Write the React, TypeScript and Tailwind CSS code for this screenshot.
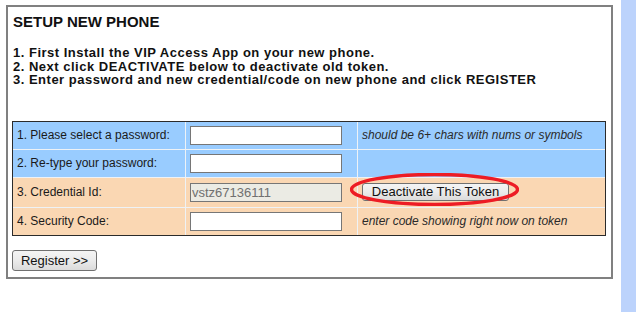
import type { ReactNode } from "react";

// Setup-phone form: a grey-framed box with instructions, a two-tone form
// table and a register button. The red ellipse is a hand-drawn annotation.

const font = { fontFamily: '"Liberation Sans", Arial, sans-serif' };

function Row({
  tone,
  label,
  h,
  field,
  note,
}: {
  tone: "blue" | "peach";
  label: string;
  h: string;
  field: ReactNode;
  note?: ReactNode;
}) {
  const bg = tone === "blue" ? "bg-[#99ccff]" : "bg-[#fad7b3]";
  return (
    <div className={`grid grid-cols-[172px_171px_1fr] gap-px ${h}`}>
      <div className={`${bg} flex items-center pl-[4px] text-[12px] text-[#1a1a1a]`}>{label}</div>
      <div className={`${bg} flex items-center pl-[4px]`}>{field}</div>
      <div className={`${bg} flex items-center pl-[4px] text-[12px] italic text-[#2a2a2a]`}>{note}</div>
    </div>
  );
}

function TextBox({ value, disabled }: { value?: string; disabled?: boolean }) {
  return (
    <input
      readOnly
      value={value ?? ""}
      disabled={disabled}
      className={`w-[152px] h-[19px] border border-[#767676] px-px text-[13px] leading-[17px] outline-none ${
        disabled ? "bg-[#ebebe4] text-[#707070]" : "bg-white"
      }`}
      style={font}
    />
  );
}

function WinButton({ children, className }: { children: ReactNode; className?: string }) {
  return (
    <button
      className={`rounded-[3px] border border-[#707070] bg-gradient-to-b from-[#f4f4f4] via-[#ebebeb] to-[#dbdbdb] text-[13px] text-[#111] ${className ?? ""}`}
      style={font}
    >
      {children}
    </button>
  );
}

export default function App() {
  return (
    <div className="flex items-start w-[636px] h-[330px] bg-white pl-[6px]" style={font}>
      <div className="mt-[5px] w-[607px] border-2 border-[#808080] px-[4px] pt-[6px] pb-[5px] text-[#111]">
        <div className="ml-px text-[15px] leading-[17px] font-bold">SETUP NEW PHONE</div>
        <div className="ml-px mt-[16px] text-[13px] leading-[13.5px] tracking-[0.5px] font-bold">
          <div>1. First Install the VIP Access App on your new phone.</div>
          <div>2. Next click DEACTIVATE below to deactivate old token.</div>
          <div>3. Enter password and new credential/code on new phone and click REGISTER</div>
        </div>

        <div className="mt-[34px] w-[594px] border border-[#2b2b2b] bg-[#eef2f6] flex flex-col gap-px">
          <Row
            tone="blue"
            h="h-[27px]"
            label="1. Please select a password:"
            field={<TextBox />}
            note="should be 6+ chars with nums or symbols"
          />
          <Row tone="blue" h="h-[27px]" label="2. Re-type your password:" field={<TextBox />} />
          <Row
            tone="peach"
            h="h-[29px]"
            label="3. Credential Id:"
            field={<TextBox value="vstz67136111" disabled />}
            note={
              <div className="relative not-italic">
                <WinButton className="w-[147px] h-[18px] leading-[16px] mt-[-3px]">
                  Deactivate This Token
                </WinButton>
                <svg
                  className="absolute left-[-12px] top-[-10px] pointer-events-none"
                  width="169"
                  height="33"
                  viewBox="0 0 169 33"
                >
                  <ellipse cx="84.5" cy="16.5" rx="83" ry="15" fill="none" stroke="#ed1c24" strokeWidth="3.5" />
                </svg>
              </div>
            }
          />
          <Row
            tone="peach"
            h="h-[27px]"
            label="4. Security Code:"
            field={<TextBox />}
            note="enter code showing right now on token"
          />
        </div>

        <WinButton className="mt-[14px] w-[85px] h-[21px] leading-[19px]">Register &gt;&gt;</WinButton>
      </div>
      <div className="ml-[8px] w-[15px] h-[312px] bg-[#bcd3fc]" />
    </div>
  );
}
